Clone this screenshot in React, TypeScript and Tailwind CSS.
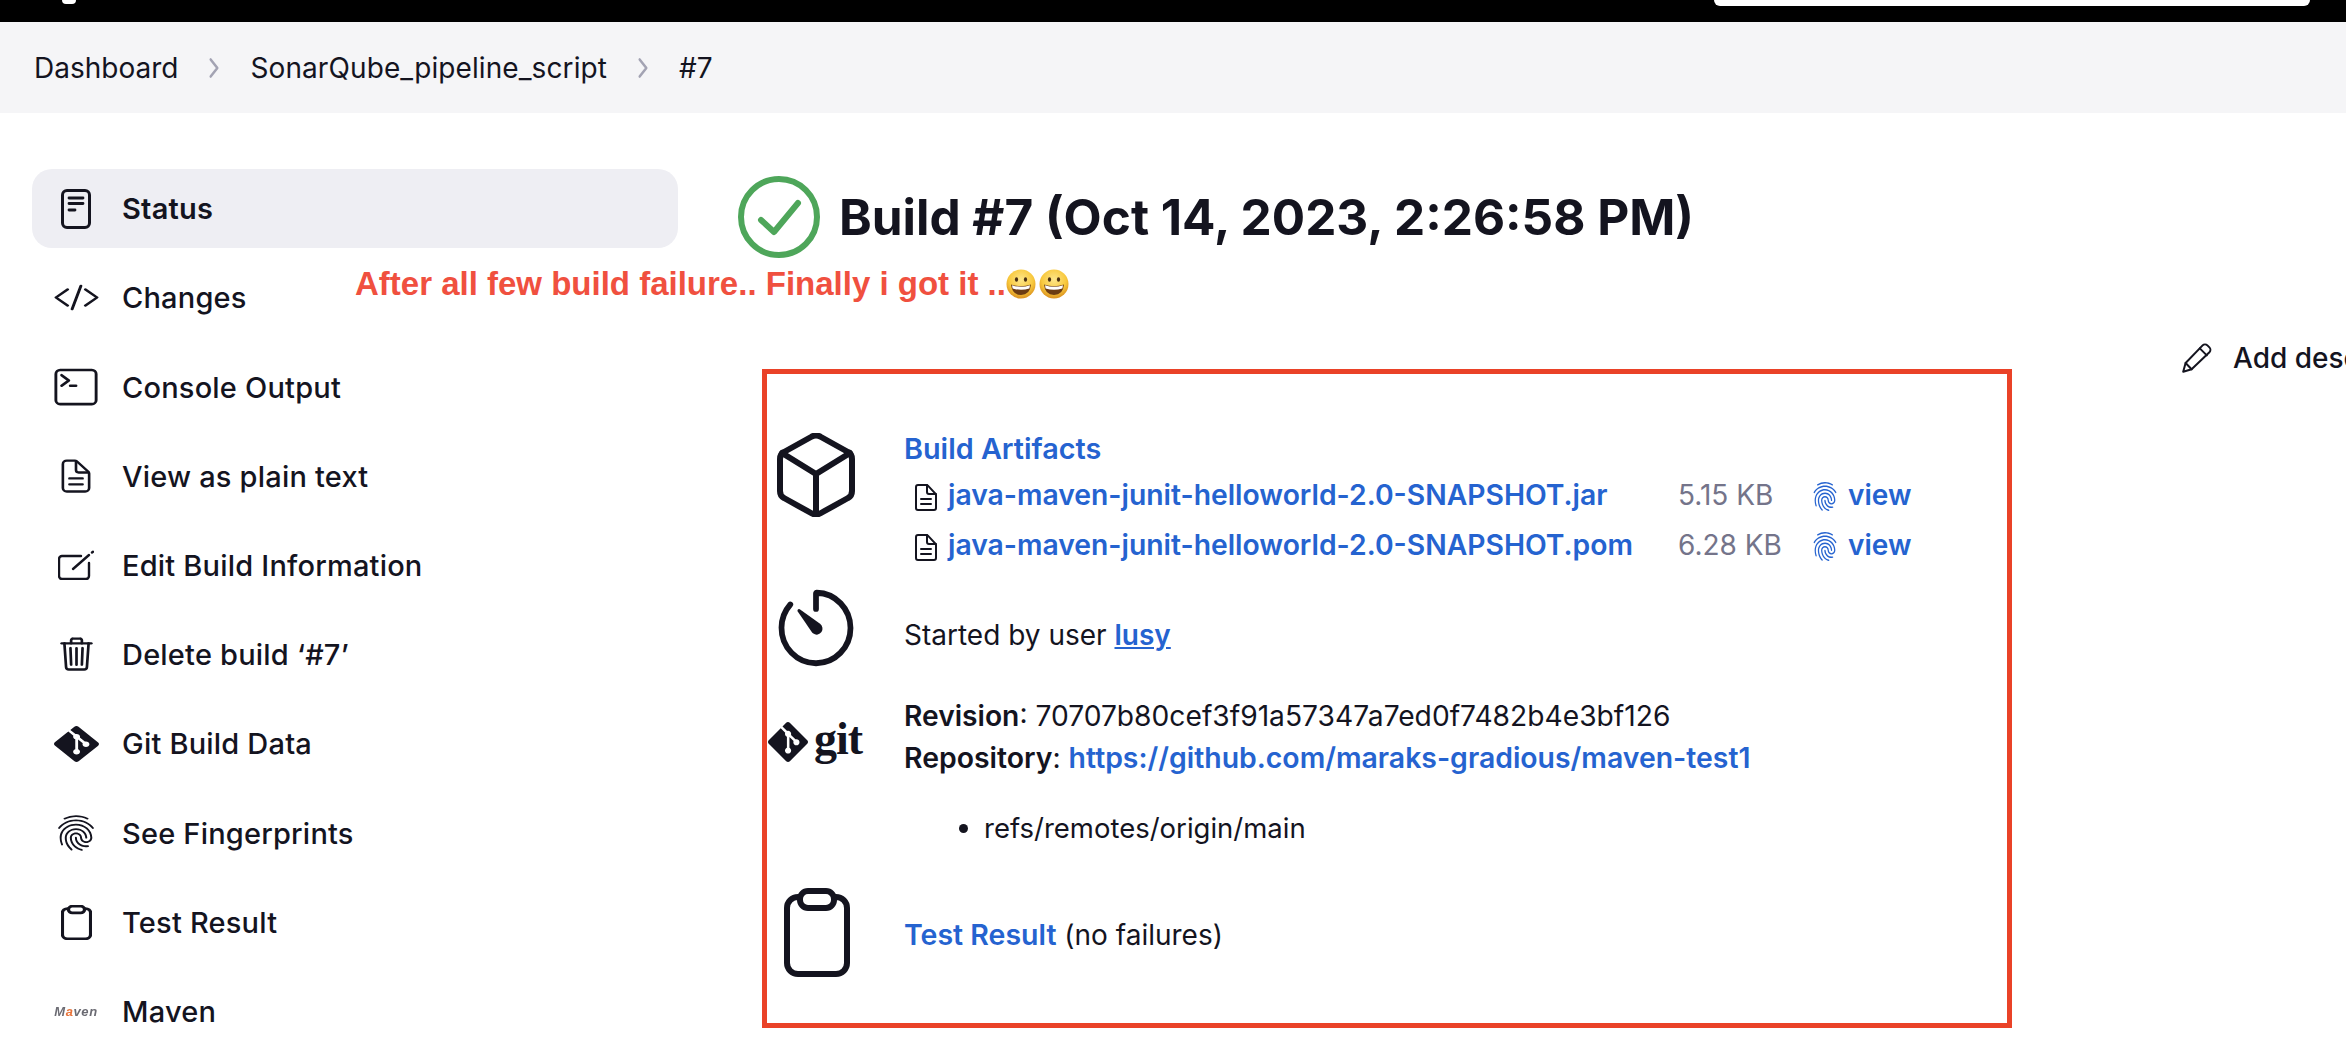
import React from "react";
import {
  IoTimerOutline, IoDocumentTextOutline, IoCodeSlashOutline, IoTerminalOutline,
  IoTrashOutline, IoFingerPrintOutline, IoChevronForward,
} from "react-icons/io5";
import { SiGit } from "react-icons/si";

const Smile = () => (
  <svg viewBox="0 0 30 30" className="w-[30px] h-[30px] shrink-0">
    <defs>
      <radialGradient id="sm" cx="50%" cy="35%" r="65%">
        <stop offset="0%" stopColor="#fde68a" />
        <stop offset="65%" stopColor="#f8c83c" />
        <stop offset="100%" stopColor="#d98f1e" />
      </radialGradient>
    </defs>
    <circle cx="15" cy="15" r="14.5" fill="url(#sm)" />
    <ellipse cx="10.5" cy="10.5" rx="1.6" ry="2.2" fill="#4a2f12" />
    <ellipse cx="19.5" cy="10.5" rx="1.6" ry="2.2" fill="#4a2f12" />
    <path d="M5 15.5 Q15 19 25 15.5 Q24 26 15 26 Q6 26 5 15.5Z" fill="#6b3b12" />
    <path d="M6 16.2 Q15 19.4 24 16.2 L23.4 19.6 Q15 22 6.6 19.6Z" fill="#fff" />
  </svg>
);

const StatusIcon = () => (
  <svg width="30" height="40" viewBox="0 0 30 40" fill="none" stroke="#14141f" strokeWidth="3" strokeLinecap="round">
    <rect x="1.5" y="1.5" width="27" height="37" rx="4.5" />
    <path d="M8 9h14M8 14.5h14" strokeWidth="2.8" />
    <path d="M8 21h6" strokeWidth="2.8" />
  </svg>
);

const NotepadIcon = () => (
  <svg width="36" height="30" viewBox="0 0 36 30" fill="none" stroke="#14141f" strokeWidth="2.4" strokeLinecap="round" strokeLinejoin="round">
    <path d="M23 6H4a3 3 0 0 0-3 3v17a3 3 0 0 0 3 3h24a3 3 0 0 0 3-3V13" />
    <path d="M15 19 31 5" />
    <path d="M34 2.5 35 1.7" />
  </svg>
);

const ClipIcon = ({ w, h, sw }: { w: number; h: number; sw: number }) => (
  <svg width={w} height={h} viewBox="0 0 66 89" preserveAspectRatio="none" fill="none" stroke="#14141f" strokeWidth={sw} strokeLinejoin="round">
    <rect x="3" y="9" width="60" height="77" rx="11" />
    <rect x="16" y="3" width="34" height="17" rx="8" fill="#fff" />
  </svg>
);

const FileIcon = () => (
  <svg width="22" height="27" viewBox="0 0 22 27" fill="none" stroke="#14141f" strokeWidth="2" strokeLinejoin="round" strokeLinecap="round">
    <path d="M3 1h8.5a2 2 0 0 1 1.4.6l7.5 8a2 2 0 0 1 .6 1.4v13a2 2 0 0 1-2 2H3a2 2 0 0 1-2-2V3a2 2 0 0 1 2-2Z" />
    <path d="M12 1v7a2 2 0 0 0 2 2h7" />
    <path d="M6 15h10M6 20h10" />
  </svg>
);

const CubeIcon = () => (
  <svg width="78" height="84" viewBox="0 0 78 84" fill="none" stroke="#14141f" strokeWidth="6" strokeLinejoin="round" strokeLinecap="round">
    <path d="M34 4Q39 1 44 4L71 19Q75 21 75 26V58Q75 63 71 65L44 80Q39 83 34 80L7 65Q3 63 3 58V26Q3 21 7 19Z" />
    <path d="M5 20 39 41 73 20M39 41V81" />
  </svg>
);

const PencilIcon = () => (
  <svg width="30" height="30" viewBox="0 0 30 30" fill="none" stroke="#14141f" strokeWidth="2" strokeLinejoin="round" strokeLinecap="round" className="shrink-0">
    <path d="M1.2 28.8 3.6 20 20.6 2.4a3.4 3.4 0 0 1 4.8 0l2 2a3.4 3.4 0 0 1 0 4.8L9.6 26.2Z" />
    <path d="M17.8 5.4 24.8 12.4M3.6 20 9.6 26.2" />
  </svg>
);

const nav: { label: string; icon: React.ReactNode; active?: boolean }[] = [
  { label: "Status", icon: <StatusIcon />, active: true },
  { label: "Changes", icon: <IoCodeSlashOutline style={{ width: 47, height: 37 }} preserveAspectRatio="none" /> },
  { label: "Console Output", icon: <IoTerminalOutline style={{ width: 46, height: 42 }} preserveAspectRatio="none" /> },
  { label: "View as plain text", icon: <IoDocumentTextOutline style={{ width: 42, height: 38 }} preserveAspectRatio="none" /> },
  { label: "Edit Build Information", icon: <NotepadIcon /> },
  { label: "Delete build ‘#7’", icon: <IoTrashOutline style={{ width: 43, height: 38 }} preserveAspectRatio="none" /> },
  { label: "Git Build Data", icon: <SiGit style={{ width: 45, height: 36 }} preserveAspectRatio="none" /> },
  { label: "See Fingerprints", icon: <IoFingerPrintOutline style={{ width: 44, height: 38 }} preserveAspectRatio="none" /> },
  { label: "Test Result", icon: <ClipIcon w={31} h={35} sw={7} /> },
  {
    label: "Maven",
    icon: (
      <span className="font-['Liberation_Sans',sans-serif] italic font-bold text-[13px] leading-none text-[#6b6b73] tracking-[0.6px] blur-[0.5px]">
        M<span className="text-[#e8743b]">a</span>ven
      </span>
    ),
  },
];

const Artifact = ({ name, size }: { name: string; size: string }) => (
  <div className="flex items-center h-[40px]">
    <span className="w-[44px] pl-[11px] shrink-0 flex items-center pt-[4px]"><FileIcon /></span>
    <a className="w-[730px] shrink-0 text-[#2563d0] font-semibold whitespace-nowrap text-[28.3px]">{name}</a>
    <span className="w-[83px] shrink-0 text-right text-[#74748a] whitespace-nowrap">{size}</span>
    <span className="ml-[50px] w-[37px] shrink-0 flex items-center pt-[2px] text-[#2563d0]">
      <IoFingerPrintOutline style={{ width: 28, height: 31 }} preserveAspectRatio="none" />
    </span>
    <a className="text-[#2563d0] font-semibold">view</a>
  </div>
);

export default function App() {
  return (
    <div className="w-[2346px] h-[1052px] overflow-hidden bg-white text-[#14141f] font-['Inter',sans-serif] relative">
      <header className="h-[22px] bg-black flex justify-between items-start pl-[62px] pr-[36px]">
        <div className="w-[14px] h-[4px] bg-white rounded-b-[4px]" />
        <div className="w-[596px] h-[6px] bg-white rounded-b-[6px]" />
      </header>

      <nav className="h-[91px] bg-[#f5f5f7] flex items-center pl-[34px] text-[28px] leading-none">
        <span>Dashboard</span>
        <IoChevronForward className="mx-[24px] text-[#a3a3b3] w-[24px] h-[30px]" preserveAspectRatio="none" />
        <span className="tracking-[0.1px]">SonarQube_pipeline_script</span>
        <IoChevronForward className="mx-[24px] text-[#a3a3b3] w-[24px] h-[30px]" preserveAspectRatio="none" />
        <span>#7</span>
      </nav>

      <div className="flex">
        <aside className="w-[706px] shrink-0 pl-[32px] pt-[56px]">
          {nav.map((n) => (
            <div
              key={n.label}
              className={`w-[646px] h-[79px] mb-[10.2px] rounded-[20px] flex items-center text-[29px] tracking-[0.2px] whitespace-nowrap ${n.active ? "bg-[#eeeef3] font-semibold" : "font-medium"}`}
            >
              <span className="w-[88px] mr-[2px] flex justify-center items-center shrink-0">{n.icon}</span>
              <span className="pt-[1px]">{n.label}</span>
            </div>
          ))}
        </aside>

        <main className="flex-1 min-w-0 pl-[32px] pt-[63px]">
          <div className="flex items-center h-[82px]">
            <svg width="82" height="82" viewBox="0 0 82 82" fill="none" className="shrink-0">
              <circle cx="41" cy="41" r="38" stroke="#4ea65a" strokeWidth="6" />
              <path d="M23 44 36 56 60 27" stroke="#4ea65a" strokeWidth="6" strokeLinecap="round" strokeLinejoin="round" />
            </svg>
            <h1 className="ml-[19px] pt-[2px] text-[49.5px] font-bold whitespace-nowrap leading-none">Build #7 (Oct 14, 2023, 2:26:58 PM)</h1>
          </div>

          <div className="flex items-start mt-[111px]">
            <section className="ml-[24px] w-[1250px] h-[659px] shrink-0 border-[5px] border-[#ea4228] pt-[55px] pl-[10px] text-[28px]">
              <div className="flex items-start">
                <span className="w-[127px] shrink-0 pt-[4px]"><CubeIcon /></span>
                <div>
                  <a className="block h-[40px] leading-[40px] text-[#2563d0] font-semibold text-[28.8px]">Build Artifacts</a>
                  <div className="mt-[6px]"><Artifact name="java-maven-junit-helloworld-2.0-SNAPSHOT.jar" size="5.15 KB" /></div>
                  <div className="mt-[10px]"><Artifact name="java-maven-junit-helloworld-2.0-SNAPSHOT.pom" size="6.28 KB" /></div>
                </div>
              </div>

              <div className="flex items-start mt-[23px]">
                <span className="w-[127px] shrink-0"><IoTimerOutline style={{ width: 92, height: 94, margin: -7 }} preserveAspectRatio="none" /></span>
                <p className="mt-[27px] h-[40px] leading-[40px]">Started by user <a className="text-[#2563d0] font-semibold underline">lusy</a></p>
              </div>

              <div className="flex items-start mt-[28px]">
                <span className="w-[127px] shrink-0 pt-[26px] flex items-center -ml-[9px] mr-[9px]">
                  <SiGit style={{ width: 40, height: 40 }} />
                  <span className="ml-[6px] font-['Liberation_Serif',serif] font-bold text-[46px] leading-[34px] tracking-[-1px] h-[40px]">git</span>
                </span>
                <div>
                  <p className="h-[40px] leading-[40px] whitespace-nowrap text-[28.2px]"><b className="font-semibold">Revision</b>: 70707b80cef3f91a57347a7ed0f7482b4e3bf126</p>
                  <p className="mt-[2px] h-[40px] leading-[40px] whitespace-nowrap text-[28.4px]"><b className="font-semibold">Repository</b>: <a className="text-[#2563d0] font-semibold">https://github.com/maraks-gradious/maven-test1</a></p>
                  <ul className="mt-[30px] list-disc pl-[80px] text-[27.5px]"><li className="h-[40px] leading-[40px]">refs/remotes/origin/main</li></ul>
                </div>
              </div>

              <div className="flex items-start mt-[40px]">
                <span className="w-[127px] shrink-0 pl-[7px]"><ClipIcon w={66} h={89} sw={6} /></span>
                <p className="mt-[27px] h-[40px] leading-[40px]"><a className="text-[#2563d0] font-semibold text-[28.5px]">Test Result</a> (no failures)</p>
              </div>
            </section>

            <div className="ml-[170px] mt-[-26px] flex items-center whitespace-nowrap text-[28px] font-medium h-[30px]">
              <PencilIcon />
              <span className="ml-[21px]">Add description</span>
            </div>
          </div>
        </main>
      </div>

      <div className="absolute left-[355px] top-[266px] flex items-center text-[#f0503f] font-['Liberation_Sans',sans-serif] font-bold text-[33px] leading-[36px] whitespace-nowrap">
        After all few build failure.. Finally i got it ..
        <Smile />
        <span className="ml-[3px]"><Smile /></span>
      </div>
    </div>
  );
}
